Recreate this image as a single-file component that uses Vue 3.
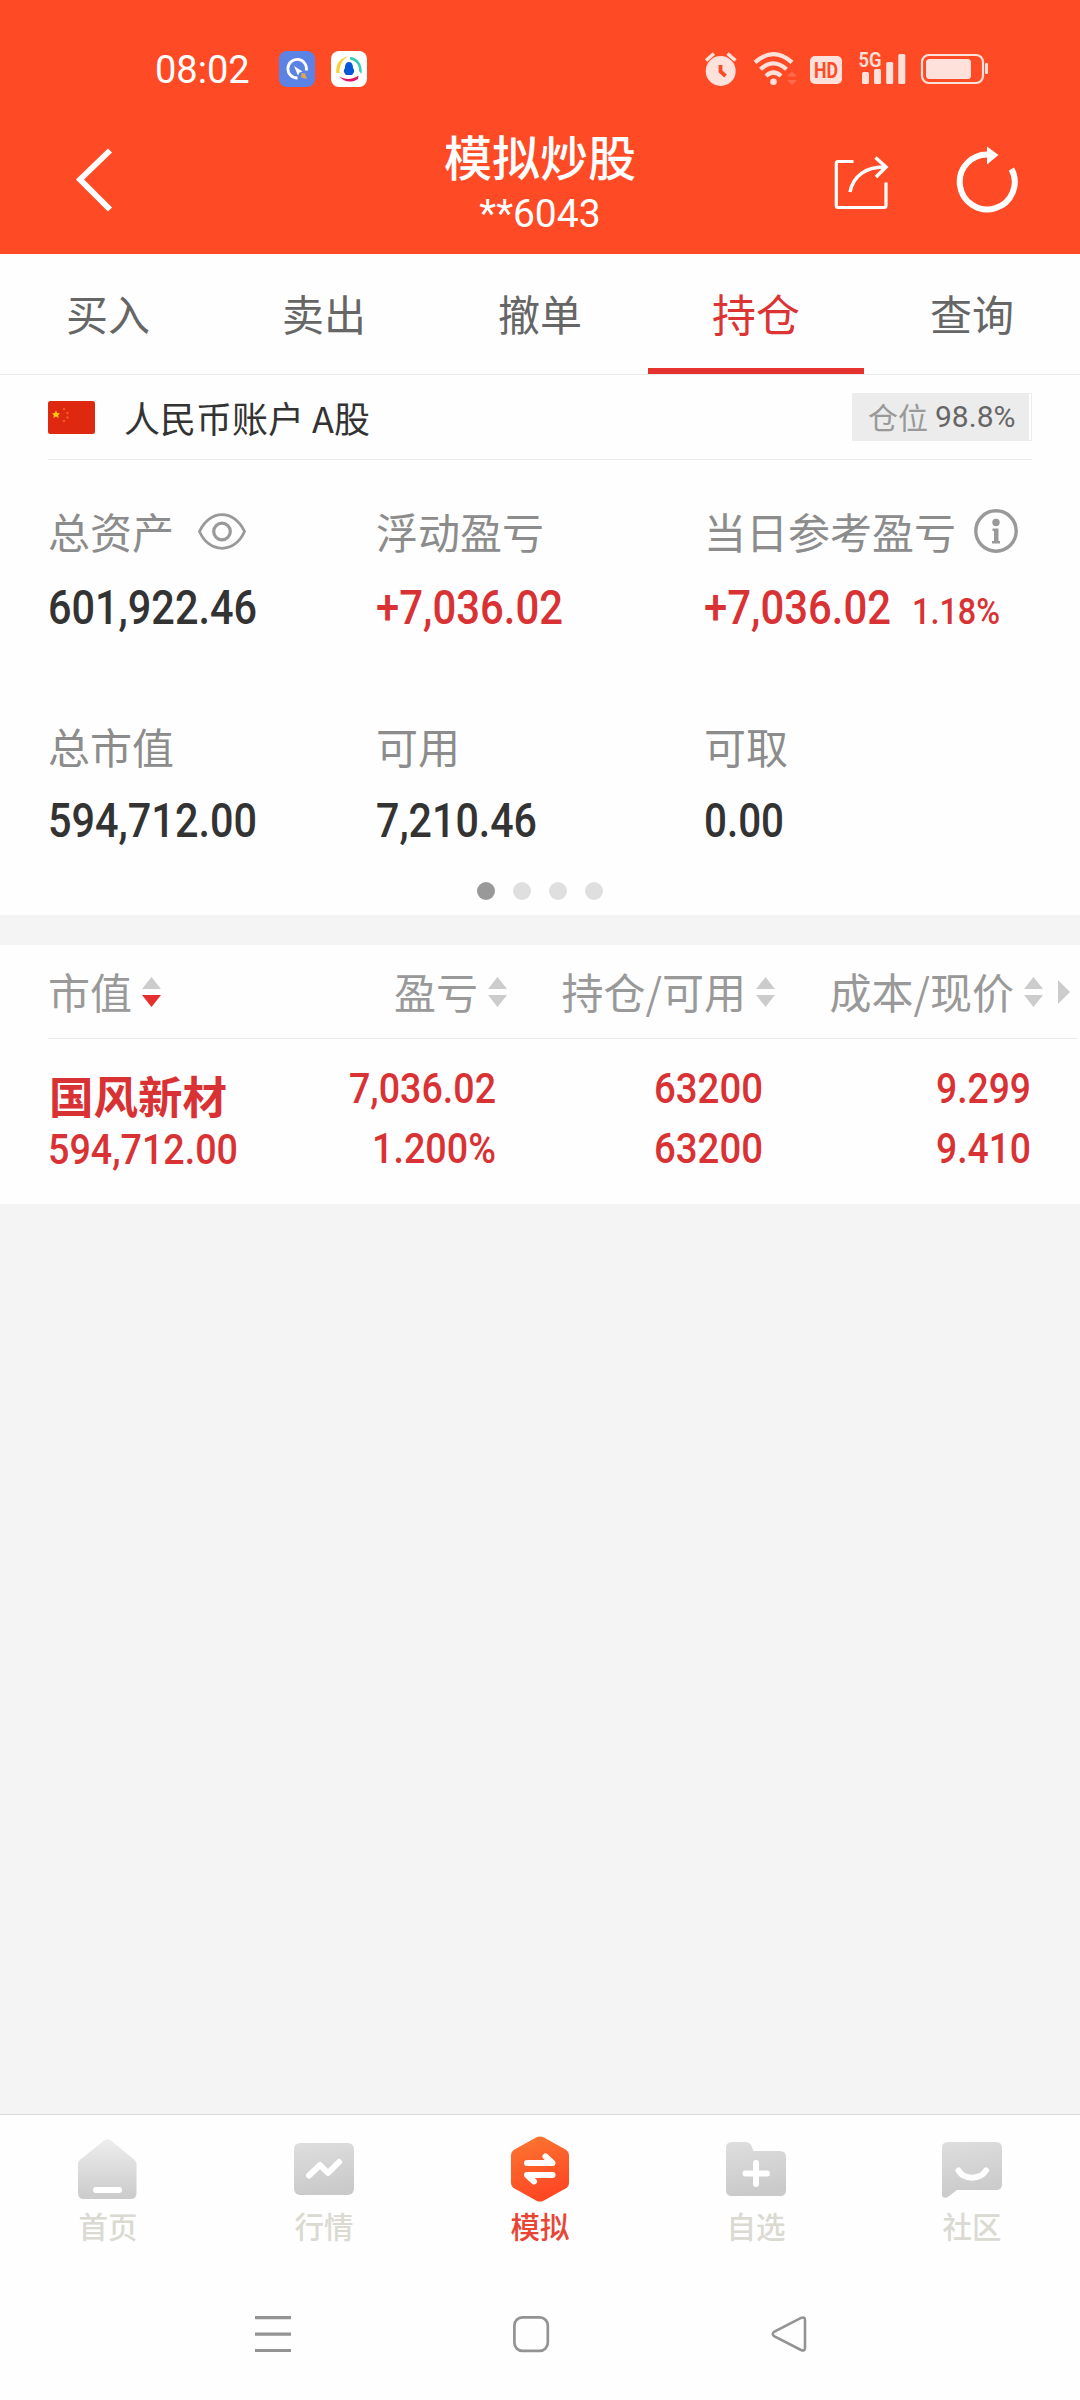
<script setup>
const tabs = ['买入', '卖出', '撤单', '持仓', '查询']
const assets = [
  { label: '总资产', value: '601,922.46', width: 209, icon: 'eye' },
  { label: '浮动盈亏', value: '+7,036.02', width: 187, up: true },
  { label: '当日参考盈亏', value: '+7,036.02', width: 187, up: true, rate: '1.18%', icon: 'info' },
  { label: '总市值', value: '594,712.00', width: 209 },
  { label: '可用', value: '7,210.46', width: 161 },
  { label: '可取', value: '0.00', width: 80 }
]
const columns = [
  { label: '市值', cls: 'c1', active: true },
  { label: '盈亏', cls: 'c2' },
  { label: '持仓/可用', cls: 'c3' },
  { label: '成本/现价', cls: 'c4' }
]
const cells = [
  { cls: 'c2', rows: [['7,036.02', 147], ['1.200%', 124]] },
  { cls: 'c3', rows: [['63200', 109], ['63200', 109]] },
  { cls: 'c4', rows: [['9.299', 95], ['9.410', 95]] }
]
const nav = ['首页', '行情', '模拟', '自选', '社区']
</script>

<template>
  <div class="page">
    <header class="top">
      <div class="status">
        <span class="time">08:02</span>
        <svg class="app1" width="36" height="36" viewBox="0 0 36 36">
          <rect width="36" height="36" rx="8" fill="#5b83e6" />
          <path d="M18.500 27 A9.300 9.300 0 1 1 27.300 19.500" fill="none" stroke="#fff" stroke-width="2.800" />
          <path d="M15 15 L23.500 20.500 L20.500 21.500 L19 24.500 Z" fill="#fff" />
          <path d="M22.500 22 L26 22.500 L28 28 L22 26.500 Z" fill="#dda750" />
        </svg>
        <svg width="36" height="36" viewBox="0 0 36 36">
          <rect width="36" height="36" rx="8" fill="#fff" />
          <path d="M17 5.500 C9 7 4.500 13 5.300 22 L8.500 22 C8 15 11 9 17 5.500Z" fill="#f4d03b" />
          <path d="M19 6 C26 6 32 13 30.500 23 L28 20 C28.500 14 25 10 19 8.500Z" fill="#3bcbb0" />
          <path d="M8 25 C13 29 22 29 27.500 24.500 L27 28 C21 32 13 31.500 8 25Z" fill="#e4125d" />
          <path d="M18 11 C14 11 14 16 14 17 C12.500 19 12.500 21 13.500 22 L15 24 H21 L22.500 22 C23.500 21 23.500 19 22 17 C22 16 22 11 18 11Z" fill="#0757d8" />
        </svg>
        <svg class="sysicons" width="290" height="46" viewBox="702 44 290 46">
          <g fill="#ffe1db">
            <circle cx="720.700" cy="71" r="15" />
            <path d="M706 60.500 L714 53.500 M727.500 53.500 L735.500 60.500" stroke="#ffe1db" stroke-width="3.500" />
            <path d="M720.500 65 V71.500 L725.500 76" fill="none" stroke="#ff4a26" stroke-width="3.800" />
            <g fill="none" stroke="#ffe1db" stroke-width="4.200">
              <path d="M755 62.300 Q773.500 46 792 62.300" />
              <path d="M760.500 69.300 Q773.500 57.500 786.500 69.300" />
              <path d="M766 76 Q773.500 69 781 76" />
            </g>
            <circle cx="773.500" cy="81.700" r="3.300" />
            <path d="M792 71.500 L797 76.500 H787Z M787 80 H797 L792 85Z" fill="#ff6a4c" />
            <rect x="810" y="56" width="32" height="28" rx="5" />
            <text x="814" y="78" class="hd" textLength="24" lengthAdjust="spacingAndGlyphs">HD</text>
            <text x="858.500" y="67" class="g5" textLength="23" lengthAdjust="spacingAndGlyphs">5G</text>
            <rect x="862" y="72" width="7" height="12" rx="1.500" />
            <rect x="874" y="69" width="7" height="15" rx="1.500" />
            <rect x="886.200" y="62" width="7" height="22" rx="1.500" />
            <rect x="898.300" y="54" width="7" height="30" rx="1.500" />
            <rect x="922" y="55" width="61" height="28" rx="7" fill="none" stroke="#ffe1db" stroke-width="2.200" />
            <rect x="926" y="59" width="45" height="20" rx="3.500" />
            <rect x="985" y="63" width="3" height="11" rx="1.200" />
          </g>
        </svg>
      </div>
      <div class="titlebar">
        <svg class="back" width="44" height="74" viewBox="75 143 44 74">
          <path d="M111 150.500 L81 179.500 L111 209.500" fill="none" stroke="#fff" stroke-width="5.800" />
        </svg>
        <div class="titles">
          <div class="title">模拟炒股</div>
          <div class="sub">**6043</div>
        </div>
        <svg class="actions" width="194" height="74" viewBox="830 143 194 74">
          <g fill="none" stroke="#fff">
            <path d="M853.500 161.500 H838 Q836.300 161.500 836.300 163.500 V205.500 Q836.300 207.500 838 207.500 H884 Q886 207.500 886 205.500 V182.500" stroke-width="3.200" />
            <path d="M850 192 C853 176 866 166.500 885 167" stroke-width="3.500" />
            <path d="M875.500 157.500 L886 167 L876 177" stroke-width="3.500" />
            <path d="M989 154.500 A27.500 27.500 0 1 0 1011.500 169" stroke-width="6" />
          </g>
          <path d="M987 146.500 L998.500 155 L987 164.500Z" fill="#fff" />
        </svg>
      </div>
    </header>

    <nav class="tabs">
      <div v-for="t in tabs" :key="t" class="tab" :class="{ on: t === '持仓' }">{{ t }}</div>
    </nav>

    <section class="account">
      <svg width="47" height="33" viewBox="0 0 47 33">
        <rect width="47" height="33" rx="2.500" fill="#de2910" />
        <path d="M8 9.500 L9.200 12 L12 12.200 L10 14.400 L10.800 17 L8 15.600 L5.200 17 L6 14.400 L4 12.200 L6.800 12Z" fill="#ffc90e" />
        <g fill="#ea5a22"><circle cx="16" cy="8" r="1.300" /><circle cx="19.500" cy="12" r="1.300" /><circle cx="19.500" cy="16.500" r="1.300" /><circle cx="16" cy="20" r="1.300" /></g>
      </svg>
      <span class="acctname">人民币账户 A股</span>
      <div class="badge"><span class="pos">仓位</span><span class="pct">98.8%</span></div>
    </section>

    <section class="assets">
      <div v-for="a in assets" :key="a.label" class="asset" :class="{ up: a.up }">
        <div class="label">
          <span>{{ a.label }}</span>
          <svg v-if="a.icon === 'eye'" class="eye" width="48" height="37" viewBox="0 0 48 37">
            <g fill="none" stroke="#999" stroke-width="2.800">
              <path d="M1.500 18.500 C6.500 7 15.500 1.700 24 1.700 S41.500 7 46.500 18.500 C41.500 30 32.500 35.300 24 35.300 S6.500 30 1.500 18.500Z" />
              <circle cx="24" cy="18.500" r="8.300" stroke-width="3.200" />
            </g>
          </svg>
          <svg v-if="a.icon === 'info'" class="info" width="44" height="44" viewBox="0 0 44 44">
            <circle cx="22" cy="22" r="20.200" fill="none" stroke="#999" stroke-width="3.400" />
            <circle cx="22" cy="13.500" r="3.700" fill="#999" />
            <path d="M18.500 19.500 H24.500 V32 H26 V34.500 H18 V32 H20 V22 H18.500Z" fill="#999" />
          </svg>
        </div>
        <div class="value">
          <svg :width="a.width" height="60"><text x="0" y="46" :textLength="a.width" lengthAdjust="spacingAndGlyphs" class="big">{{ a.value }}</text></svg>
          <svg v-if="a.rate" class="rate" width="90" height="60"><text x="0" y="46" textLength="88" lengthAdjust="spacingAndGlyphs">{{ a.rate }}</text></svg>
        </div>
      </div>
    </section>
    <div class="dots"><i class="cur"></i><i></i><i></i><i></i></div>

    <section class="table">
      <div class="thead">
        <div v-for="c in columns" :key="c.label" class="th" :class="c.cls">
          <span>{{ c.label }}</span>
          <svg width="19" height="30" viewBox="0 0 19 30">
            <path d="M9.500 0 L19 12 H0Z" fill="#ccc" />
            <path d="M0 18 H19 L9.500 30Z" :fill="c.active ? '#e6302f' : '#ccc'" />
          </svg>
        </div>
        <svg class="more" width="12" height="24" viewBox="0 0 12 24"><path d="M0 0 L12 12 L0 24Z" fill="#ccc" /></svg>
      </div>
      <div class="row">
        <div class="stock">
          <div class="name">国风新材</div>
          <svg width="190" height="56"><text x="0" y="42" textLength="190" lengthAdjust="spacingAndGlyphs">594,712.00</text></svg>
        </div>
        <div v-for="c in cells" :key="c.cls" class="cell" :class="c.cls">
          <svg v-for="(r, i) in c.rows" :key="i" :width="r[1]" height="60"><text x="0" y="45" :textLength="r[1]" lengthAdjust="spacingAndGlyphs">{{ r[0] }}</text></svg>
        </div>
      </div>
    </section>

    <main class="blank"></main>

    <footer class="bottom">
      <svg width="0" height="0" class="defs">
        <defs>
          <linearGradient id="gHome" x1="0" y1="0" x2="0" y2="1"><stop offset="0" stop-color="#ededed" /><stop offset="1" stop-color="#cbcbcb" /></linearGradient>
          <linearGradient id="gGrey" x1="0" y1="0" x2=".2" y2="1"><stop offset="0" stop-color="#dedede" /><stop offset="1" stop-color="#cacaca" /></linearGradient>
          <linearGradient id="gHot" x1=".3" y1="0" x2=".6" y2="1"><stop offset="0" stop-color="#fb7430" /><stop offset="1" stop-color="#ff4322" /></linearGradient>
        </defs>
      </svg>
      <div class="nav">
        <div v-for="(n, i) in nav" :key="n" class="item" :class="{ on: i === 2 }">
          <svg width="60" height="68" viewBox="0 0 60 68">
            <g v-if="i === 0">
              <path d="M26 4.500 Q29.500 2 33 4.500 L56 23.500 Q58.500 25.500 58.500 28 V57 Q58.500 63 52.500 63 H6 Q0 63 0 57 V28 Q0 25.500 2.500 23.500Z" fill="url(#gHome)" />
              <path d="M18 54 H41" stroke="#fff" stroke-width="6" stroke-linecap="round" />
            </g>
            <g v-else-if="i === 1">
              <rect y="7" width="60" height="52" rx="6" fill="url(#gGrey)" />
              <path d="M15 39.500 L26 29 L34 37 L45 26" fill="none" stroke="#fff" stroke-width="6" stroke-linecap="round" stroke-linejoin="round" />
            </g>
            <g v-else-if="i === 2">
              <path d="M26.500 1.300 Q30 -.5 33.500 1.300 L55.500 13.500 Q59 15.500 59 19.500 V46.500 Q59 50.500 55.500 52.500 L33.500 64.700 Q30 66.500 26.500 64.700 L4.500 52.500 Q1 50.500 1 46.500 V19.500 Q1 15.500 4.500 13.500Z" fill="url(#gHot)" />
              <path d="M17 27 H42.500 L35.500 20.500 M42.500 39 H17 L24 45.500" fill="none" stroke="#fff" stroke-width="6" stroke-linecap="round" stroke-linejoin="round" />
            </g>
            <g v-else-if="i === 3">
              <path d="M6 6 H19 Q24 6 25.500 10 L27.500 15 H54 Q60 15 60 21 V54 Q60 60 54 60 H6 Q0 60 0 54 V12 Q0 6 6 6Z" fill="url(#gGrey)" />
              <path d="M19.500 37.500 H41 M30 27 V48" stroke="#fff" stroke-width="6" stroke-linecap="round" />
            </g>
            <g v-else>
              <path d="M6 6 H54 Q60 6 60 12 V48 Q60 54 54 54 H15 L5 61.500 Q0 63 0 58 V12 Q0 6 6 6Z" fill="url(#gGrey)" />
              <path d="M16.500 34.500 C22 44 38 44 44 34.500" fill="none" stroke="#fff" stroke-width="6" stroke-linecap="round" />
            </g>
          </svg>
          <span>{{ n }}</span>
        </div>
      </div>
      <div class="sys">
        <svg width="36" height="37" viewBox="0 0 36 37"><path d="M0 1.700 H36 M0 18.200 H36 M0 34.500 H36" stroke="#939393" stroke-width="3.200" /></svg>
        <svg width="36" height="37" viewBox="0 0 36 37"><rect x="1.400" y="1.400" width="33.400" height="33.400" rx="8" fill="none" stroke="#939393" stroke-width="2.700" /></svg>
        <svg width="36" height="37" viewBox="0 0 36 37"><path d="M30 1.900 Q34 .5 34 4 V32 Q34 35.500 30 34 L3.500 20.500 Q0 18 3.500 15.500Z" fill="none" stroke="#939393" stroke-width="2.600" /></svg>
      </div>
    </footer>
  </div>
</template>

<style>
body { margin: 0; background: #f4f4f4; }
</style>

<style scoped>
.page { width: 1080px; height: 2400px; display: flex; flex-direction: column; overflow: hidden; background: #fefefe; font-family: "Noto Sans CJK SC", sans-serif; }
.page * { box-sizing: border-box; }
svg { display: block; flex: none; overflow: visible; }
text { font-family: Roboto, sans-serif; font-weight: 550; }
.top { height: 254px; flex: none; background: #ff4a26; color: #fff; }
.status { height: 138px; padding: 51px 88px 0 155px; display: flex; align-items: flex-start; }
.time { width: 124px; margin-top: -3px; font: 400 38px/44px Roboto, sans-serif; }
.app1 { margin-right: 16px; }
.sysicons { margin: -7px 0 0 auto; }
.hd { font-size: 22px; font-weight: 700; fill: #ff4a26; }
.g5 { font-size: 20px; font-weight: 600; }
.titlebar { height: 116px; padding: 0 56px 0 74px; display: flex; }
.back, .actions { margin-top: 5px; }
.back { margin-right: 132px; }
.titles { flex: 1; margin-top: -13px; text-align: center; }
.title { font-size: 48px; line-height: 60px; font-weight: 500; }
.sub { font: 400 39px/46px Roboto, sans-serif; margin-top: 6px; }
.tabs { height: 121px; flex: none; display: flex; border-bottom: 1px solid #e9e9e9; }
.tab { flex: 1; text-align: center; font-size: 42px; line-height: 118px; color: #666; }
.tab.on { font-size: 44px; color: #dc3434; border-bottom: 6px solid #e5322e; }
.account { height: 85px; flex: none; margin: 0 48px; display: flex; align-items: center; border-bottom: 1px solid #e9e9e9; }
.acctname { margin-left: 29px; font-size: 36px; line-height: 50px; color: #333; }
.badge { width: 180px; height: 48px; margin-left: auto; display: flex; align-items: center; padding-left: 15px; border: 1px solid #ececec; background: linear-gradient(90deg, #ececec 176px, #fefefe 176px); }
.pos { font-size: 30px; line-height: 44px; margin-top: -3px; color: #999; }
.pct { margin-left: 7px; font: 400 30px/44px Roboto, sans-serif; color: #666; }
.assets { flex: none; height: 422px; padding: 41px 48px 0; display: grid; grid-template-columns: repeat(3, 328px); grid-template-rows: 215px 166px; }
.label { height: 60px; display: flex; align-items: center; font-size: 42px; line-height: 60px; color: #8c8c8c; white-space: nowrap; }
.eye { margin-left: 24px; }
.info { margin-left: 18px; margin-top: -1px; }
.value { display: flex; margin-top: 17px; }
.asset:nth-child(n+4) .value { margin-top: 15px; }
.value text { fill: #333; }
.big { font-size: 48px; }
.up .value text { fill: #d93234; }
.rate { margin-left: 21px; }
.rate text { font-size: 37px; font-weight: 500; }
.dots { flex: none; height: 33px; display: flex; justify-content: center; gap: 18px; }
.dots i { width: 18px; height: 18px; border-radius: 50%; background: #dfdfdf; }
.dots .cur { background: #999; }
.table { flex: none; height: 289px; border-top: 30px solid #f4f4f4; }
.thead { height: 94px; width: 1029px; margin-left: 48px; border-bottom: 1px solid #e9e9e9; display: flex; align-items: center; color: #999; }
.th { display: flex; align-items: center; justify-content: flex-end; gap: 10px; font-size: 42px; line-height: 60px; white-space: nowrap; }
.th span { margin-top: -2px; }
.th.c1 { width: 113px; }
.th.c2 { width: 346px; }
.th.c3 { width: 268px; }
.th.c4 { width: 268px; }
.more { margin-left: 15px; }
.row { display: flex; padding-left: 48px; }
.stock { width: 240px; padding-top: 24px; }
.name { font-size: 44.500px; line-height: 64px; font-weight: 600; color: #d93234; padding-left: 1px; }
.row text { font-size: 42px; fill: #d93234; }
.stock svg { margin-top: -5px; }
.cell { display: flex; flex-direction: column; align-items: flex-end; padding-top: 19px; }
.cell.c2 { width: 208px; }
.cell.c3 { width: 267px; }
.cell.c4 { width: 268px; }
.blank { flex: 1; background: #f4f4f4; }
.bottom { flex: none; height: 286px; border-top: 1px solid #dadada; }
.nav { display: flex; height: 165px; padding-top: 21px; }
.item { flex: 1; display: flex; flex-direction: column; align-items: center; font-size: 29.500px; line-height: 43px; font-weight: 500; color: #dadad2; }
.item.on { color: #ea4434; }
.sys { display: flex; padding: 36px 273px 0 255px; justify-content: space-between; }
</style>
